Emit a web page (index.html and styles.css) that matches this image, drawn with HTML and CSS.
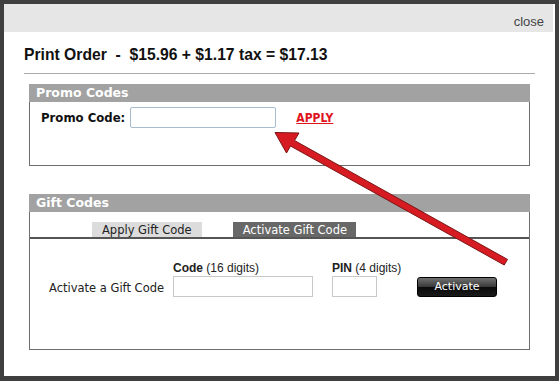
FILE: index.html
```html
<!DOCTYPE html>
<html>
<head>
<meta charset="utf-8">
<link rel="stylesheet" href="styles.css">
</head>
<body>
<div class="frame">
  <div class="topbar"><span class="close">close</span></div>
  <div class="content">
    <h1 class="title">Print Order&nbsp; - &nbsp;$15.96 + $1.17 tax = $17.13</h1>
    <div class="rule"></div>

    <div class="box promo">
      <div class="box-head">Promo Codes</div>
      <div class="promo-row">
        <span class="promo-label">Promo Code:</span>
        <span class="input promo-input"></span>
        <a class="apply">APPLY</a>
      </div>
    </div>

    <div class="box gift">
      <div class="box-head">Gift Codes</div>
      <div class="tabs">
        <span class="tab">Apply Gift Code</span>
        <span class="tab active">Activate Gift Code</span>
      </div>
      <div class="gift-form">
        <span class="field-label code-label"><b>Code</b> (16 digits)</span>
        <span class="field-label pin-label"><b>PIN</b> (4 digits)</span>
        <span class="row-label">Activate a Gift Code</span>
        <span class="input code-input"></span>
        <span class="input pin-input"></span>
        <span class="btn">Activate</span>
      </div>
    </div>
  </div>
</div>
<svg class="arrow" width="559" height="381" viewBox="0 0 559 381">
  <polygon points="275,132.5 299,133 294.5,140.5 507.5,259.4 504.2,265 290.5,146 286.5,153" fill="#d61c22" stroke="#7d1414" stroke-width="1" stroke-linejoin="miter"/>
</svg>
</body>
</html>
```
FILE: styles.css
```css
html, body {
  margin: 0;
  padding: 0;
  background: #fff;
}
body {
  position: relative;
  width: 559px;
  height: 381px;
  overflow: hidden;
  font-family: "Liberation Sans", Arial, sans-serif;
  color: #111;
}
.frame {
  box-sizing: border-box;
  width: 559px;
  height: 381px;
  border-style: solid;
  border-color: #3f3f3f;
  border-width: 4px 4px 5px 4px;
  background: #fff;
}
.topbar {
  height: 28px;
  margin-right: 2px;
  background: #e6e6e6;
  display: flex;
  justify-content: flex-end;
  align-items: flex-start;
  padding-right: 9px;
}
.close {
  font-size: 13px;
  line-height: 15px;
  margin-top: 10px;
  color: #444;
}
.content {
  padding: 12px 20px 0 20px;
}
.title {
  margin: 0;
  font-size: 15.7px;
  line-height: 21px;
  font-weight: bold;
  color: #111;
}
.rule {
  margin-top: 8px;
  border-top: 1px solid #aaa;
}
.box {
  margin: 0 5px;
  border: 1px solid #6e6e6e;
  border-top: none;
}
.promo {
  margin-top: 10px;
  height: 82px;
  box-sizing: border-box;
}
.gift {
  margin-top: 28px;
}
.box-head {
  height: 18px;
  margin: 0 -1px;
  background: #a2a2a2;
  color: #fff;
  font-family: "DejaVu Sans", sans-serif;
  font-weight: bold;
  font-size: 12.5px;
  line-height: 18px;
  padding-left: 7px;
}
.promo-row {
  display: flex;
  align-items: center;
  padding: 5px 0 0 11px;
  height: 21px;
}
.promo-label {
  font-family: "DejaVu Sans Condensed", "DejaVu Sans", sans-serif;
  font-stretch: condensed;
  font-weight: bold;
  font-size: 13px;
  color: #111;
  margin-right: 5px;
}
.input {
  display: block;
  box-sizing: border-box;
  height: 21px;
  background: #fff;
  border: 1px solid #c9c9c9;
}
.promo-input {
  width: 146px;
  border-color: #a7bccd;
  border-radius: 2px;
}
.apply {
  margin-left: 20px;
  font-family: "DejaVu Sans Condensed", "DejaVu Sans", sans-serif;
  font-stretch: condensed;
  font-weight: bold;
  font-size: 12px;
  color: #e0141c;
  text-decoration: underline;
}
.tabs {
  display: flex;
  gap: 31px;
  padding: 10px 0 0 62px;
  border-bottom: 2px solid #555;
}
.tab {
  display: block;
  height: 15px;
  padding: 1px 10px 0;
  box-sizing: border-box;
  font-family: "DejaVu Sans", sans-serif;
  font-size: 11.5px;
  line-height: 14px;
  background: #dcdcdc;
  color: #222;
}
.tab.active {
  background: #686868;
  color: #fff;
  padding: 1px 9px 0 10px;
}
.gift-form {
  display: grid;
  grid-template-columns: 124px 140px 45px 80px;
  grid-template-rows: 14px 21px;
  column-gap: 0;
  row-gap: 1px;
  padding: 22px 0 52px 19px;
}
.field-label {
  font-size: 12px;
  line-height: 14px;
  color: #222;
  white-space: nowrap;
}
.code-label { grid-column: 2; grid-row: 1; }
.pin-label { grid-column: 3; grid-row: 1; margin-left: 19px; }
.row-label {
  grid-column: 1;
  grid-row: 2;
  font-family: "DejaVu Sans", sans-serif;
  font-size: 11.5px;
  line-height: 14px;
  color: #222;
  align-self: center;
  padding-top: 3px;
}
.code-input { grid-column: 2; grid-row: 2; width: 140px; }
.pin-input { grid-column: 3; grid-row: 2; width: 45px; margin-left: 19px; }
.btn {
  grid-column: 4;
  grid-row: 2;
  margin-left: 59px;
  width: 80px;
  height: 20px;
  align-self: center;
  box-sizing: border-box;
  border: 1px solid #000;
  border-radius: 3px;
  background: linear-gradient(#707070 0%, #3a3a3a 48%, #0a0a0a 52%, #1a1a1a 100%);
  color: #fff;
  font-family: "DejaVu Sans", sans-serif;
  font-size: 11px;
  line-height: 18px;
  text-align: center;
}
.arrow {
  position: absolute;
  left: 0;
  top: 0;
  pointer-events: none;
}
```
